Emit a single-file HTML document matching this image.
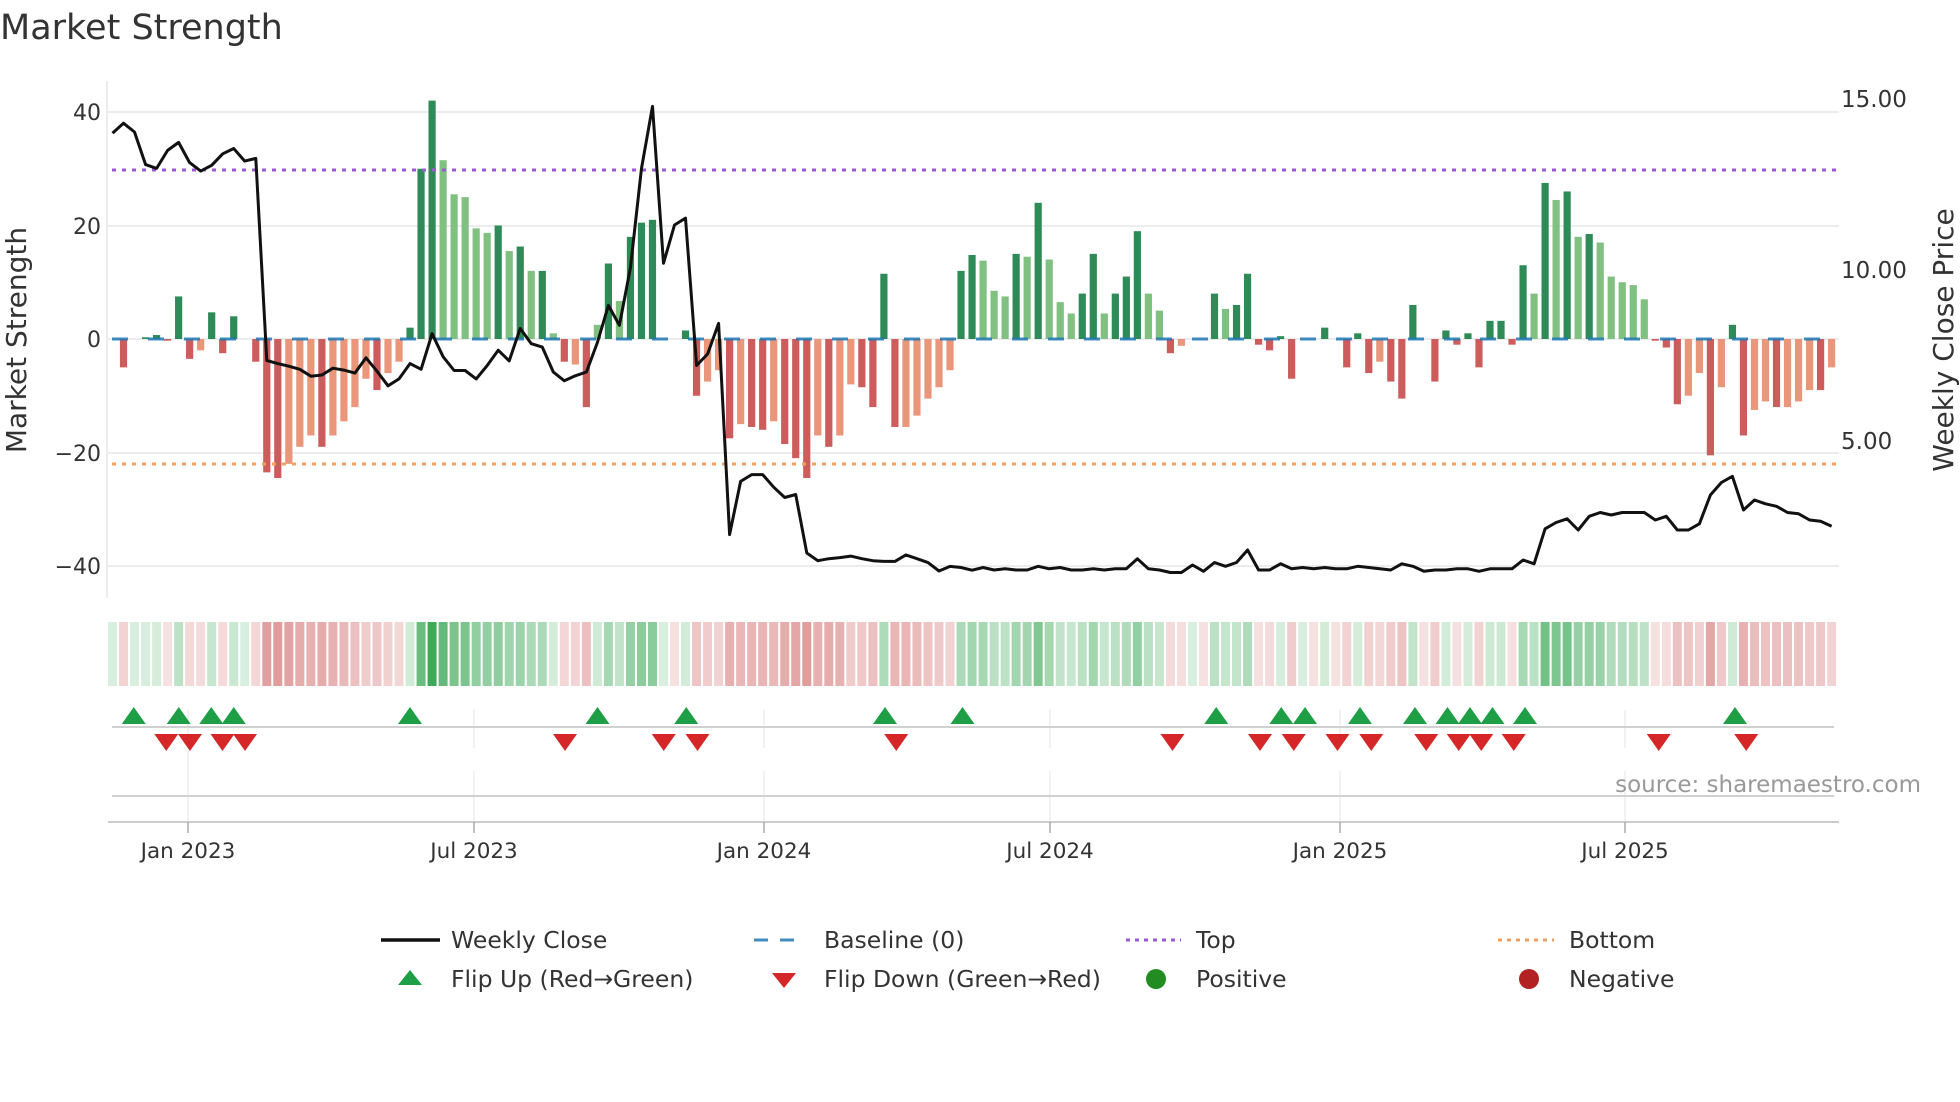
<!DOCTYPE html>
<html><head><meta charset="utf-8">
<style>
html,body{margin:0;padding:0;background:#fff;width:1960px;height:1102px;overflow:hidden}
svg{display:block}
text{font-family:"DejaVu Sans","Liberation Sans",sans-serif;fill:#333}
</style></head>
<body>
<svg id="s" width="1960" height="1102" viewBox="0 0 1960 1102" xmlns="http://www.w3.org/2000/svg">
<text x="0" y="39" font-size="35">Market Strength</text>
<!-- grid -->
<g stroke="#ececef" stroke-width="2">
<line x1="108" y1="112" x2="1839" y2="112"/>
<line x1="108" y1="226" x2="1839" y2="226"/>
<line x1="108" y1="339" x2="1839" y2="339"/>
<line x1="108" y1="453" x2="1839" y2="453"/>
<line x1="108" y1="566" x2="1839" y2="566"/>
</g>
<line x1="107" y1="81" x2="107" y2="598" stroke="#e6e6e6" stroke-width="1.5"/>
<g font-size="22" text-anchor="end">
<text x="101" y="120">40</text>
<text x="101" y="234">20</text>
<text x="101" y="347">0</text>
<text x="101" y="461">−20</text>
<text x="101" y="574">−40</text>
</g>
<g font-size="23">
<text x="1841" y="107">15.00</text>
<text x="1841" y="278">10.00</text>
<text x="1841" y="449">5.00</text>
</g>
<text transform="translate(26,340) rotate(-90)" font-size="28" text-anchor="middle">Market Strength</text>
<text transform="translate(1953,340) rotate(-90)" font-size="28" text-anchor="middle">Weekly Close Price</text>
<g id="bars"></g>
<line x1="112" y1="339" x2="1839" y2="339" stroke="#1f77b4" stroke-width="3" stroke-dasharray="16,20" opacity="0.85"/>
<line x1="112" y1="170" x2="1839" y2="170" stroke="#9b59d6" stroke-width="3" stroke-dasharray="4,6"/>
<line x1="112" y1="464" x2="1839" y2="464" stroke="#f0a060" stroke-width="3" stroke-dasharray="4,6"/>
<polyline id="price" fill="none" stroke="#111" stroke-width="3" stroke-linejoin="round"/>
<g id="heat"></g>
<!-- lower panels -->
<g stroke="#eceef2" stroke-width="1.5">
<line x1="188" y1="710" x2="188" y2="822"/><line x1="474" y1="710" x2="474" y2="748"/><line x1="474" y1="771" x2="474" y2="822"/>
<line x1="764" y1="710" x2="764" y2="748"/><line x1="764" y1="771" x2="764" y2="822"/>
<line x1="1050" y1="710" x2="1050" y2="748"/><line x1="1050" y1="771" x2="1050" y2="822"/>
<line x1="1340" y1="710" x2="1340" y2="748"/><line x1="1340" y1="771" x2="1340" y2="822"/>
<line x1="1625" y1="710" x2="1625" y2="748"/><line x1="1625" y1="771" x2="1625" y2="822"/>
</g>
<line x1="112" y1="727" x2="1834" y2="727" stroke="#d0d0d0" stroke-width="2"/>
<line x1="112" y1="796" x2="1834" y2="796" stroke="#d0d0d0" stroke-width="2"/>
<line x1="108" y1="822" x2="1839" y2="822" stroke="#ccc" stroke-width="2"/>
<g stroke="#aaa" stroke-width="1.5">
<line x1="188" y1="822" x2="188" y2="833"/><line x1="474" y1="822" x2="474" y2="833"/><line x1="764" y1="822" x2="764" y2="833"/>
<line x1="1050" y1="822" x2="1050" y2="833"/><line x1="1340" y1="822" x2="1340" y2="833"/><line x1="1625" y1="822" x2="1625" y2="833"/>
</g>
<g id="flips"></g>
<g font-size="21.5" text-anchor="middle">
<text x="188" y="858">Jan 2023</text>
<text x="474" y="858">Jul 2023</text>
<text x="764" y="858">Jan 2024</text>
<text x="1050" y="858">Jul 2024</text>
<text x="1340" y="858">Jan 2025</text>
<text x="1625" y="858">Jul 2025</text>
</g>
<text x="1921" y="792" font-size="23" text-anchor="end" style="fill:#999">source: sharemaestro.com</text>
<!-- legend -->
<g font-size="23.5">
<line x1="381" y1="940" x2="440" y2="940" stroke="#111" stroke-width="3.5"/>
<text x="451" y="948">Weekly Close</text>
<line x1="754" y1="940" x2="806" y2="940" stroke="#1f77b4" stroke-width="3" stroke-dasharray="14,12" opacity="0.85"/>
<text x="824" y="948">Baseline (0)</text>
<line x1="1126" y1="940" x2="1181" y2="940" stroke="#9b59d6" stroke-width="3" stroke-dasharray="4,5"/>
<text x="1196" y="948">Top</text>
<line x1="1498" y1="940" x2="1554" y2="940" stroke="#f0a060" stroke-width="3" stroke-dasharray="4,5"/>
<text x="1569" y="948">Bottom</text>
<polygon points="398,985 422,985 410,970" fill="#1e9e45"/>
<text x="451" y="987">Flip Up (Red→Green)</text>
<polygon points="772,973 796,973 784,988" fill="#d62728"/>
<text x="824" y="987">Flip Down (Green→Red)</text>
<circle cx="1156" cy="979" r="10" fill="#228b22"/>
<text x="1196" y="987">Positive</text>
<circle cx="1529" cy="979" r="10" fill="#b22222"/>
<text x="1569" y="987">Negative</text>
</g>
</svg>
<script>
var V=[0,-5,0,0.3,0.7,-0.3,7.5,-3.5,-2,4.7,
-2.5,4,0,-4,-23.5,-24.5,-22,-19,-17,-19,
-17,-14.5,-12,-7,-9,-6,-4,2,30,42,
31.5,25.5,25,19.5,18.7,20,15.5,16.3,12,12,
1,-4,-4.5,-12,2.5,13.3,6.7,18,20.5,21,
0,0,1.5,-10,-7.5,-5.5,-17.5,-15,-15.5,-16,
-14.5,-18.5,-21,-24.5,-17,-19,-17,-8,-8.5,-12,
11.5,-15.5,-15.5,-13.5,-10.5,-8.5,-5.5,12,14.8,13.8,
8.5,7.5,15,14.5,24,14,6.5,4.5,8,15,
4.5,8,11,19,8,5,-2.5,-1.2,0,0,
8,5.3,6,11.5,-1,-2,0.5,-7,0,0,
2,0,-5,1,-6,-4,-7.5,-10.5,6,0,
-7.5,1.5,-1,1,-5,3.2,3.2,-1,13,8,
27.5,24.5,26,18,18.5,17,11,10,9.5,7,
-0.3,-1.5,-11.5,-10,-6,-20.5,-8.5,2.5,-17,-12.5,
-11,-12,-12,-11,-9,-9,-5];
var F="0D0DDDDDLD"+"DD0DDDLLLD"+"LLLLDLLDDD"+"LLLLLDLDLD"+"LDLDLDLDDD"+"00DDLLDLDD"+"LDDDLDLLDD"+"DDLLLLLDDL"+"LLDLDLLLDD"+"LDDDLLDL00"+"DLDDDDDD00"+"D0DDDLDDD0"+"DDDDDDDDDL"+"DLDLDLLLLL"+"DDDLLDLDDL"+"LDLLLDL";
var PZ=[348,322,345,430,440,393,372,425,447,432,402,388,421,414,942,950,957,965,983,980,962,967,975,935,970,1008,990,950,965,872,932,968,968,990,955,915,943,858,898,907,972,995,982,972,895,798,850,700,440,278,688,588,570,955,925,845,1397,1258,1240,1240,1273,1300,1292,1445,1465,1460,1457,1453,1460,1465,1467,1467,1450,1460,1470,1492,1480,1483,1490];
var PD=[454,456,455,456,456,453,455,454,456,456,455,456,455,455,447,455,456,458,458,452,457,450,453,450,440,456,456,451,455,454,455,454,455,455,453,454,455,456,451,453,457,456,456,455,455,457,455,455,455,448,451,423,418,415,424,413,410,412,410,410,410,416,413,424,424,419,396,386,381,408,400,403,405,410,411,416,417,421];
var NS="http://www.w3.org/2000/svg";
function el(t,a,p){var e=document.createElementNS(NS,t);for(var k in a)e.setAttribute(k,a[k]);p.appendChild(e);return e;}
var bars=document.getElementById("bars"),heat=document.getElementById("heat"),fl=document.getElementById("flips");
var X=function(i){return 112.5+11.02*i;};
for(var i=0;i<V.length;i++){
 var v=V[i],x=X(i),f=F[i];
 if(Math.abs(v)>0.05){
  var col=v>0?(f=="L"?"#80c080":"#2e8b57"):(f=="L"?"#e9967a":"#cd5c5c");
  var h=Math.abs(v)*5.675,y=v>0?339-h:339;
  el("rect",{x:x-3.6,y:y,width:7.2,height:Math.max(h,1.5),fill:col},bars);
 }
 var a=Math.min(Math.abs(v)/42,1);
 var c=v>=0&&!(v==0&&F[i]=="0"&&i%2)?"rgba(40,160,70,"+(0.18+0.72*a)+")":"rgba(205,90,90,"+(0.18+0.72*a)+")";
 el("rect",{x:X(i)-5.5+1,y:622,width:9,height:64,fill:c},heat);
}
var pts=[];
for(var i=0;i<PZ.length;i++)pts.push(X(i).toFixed(1)+","+(PZ[i]/2.613).toFixed(1));
for(var j=0;j<PD.length;j++)pts.push(X(79+j).toFixed(1)+","+(PD[j]*1.25).toFixed(1));
document.getElementById("price").setAttribute("points",pts.join(" "));
var up=[107,143,169,187,328,478,549,708,770,973,1025,1044,1088,1132,1158,1176,1194,1220,1388];
var dn=[133,152,178,196,452,531,558,717,938,1008,1035,1070,1097,1141,1167,1185,1211,1327,1397];
up.forEach(function(d){var x=d*1.25;el("polygon",{points:(x-12)+",724 "+(x+12)+",724 "+x+",707",fill:"#1e9e45"},fl);});
dn.forEach(function(d){var x=d*1.25;el("polygon",{points:(x-12)+",734 "+(x+12)+",734 "+x+",751",fill:"#d62728"},fl);});
</script>
</body></html>
